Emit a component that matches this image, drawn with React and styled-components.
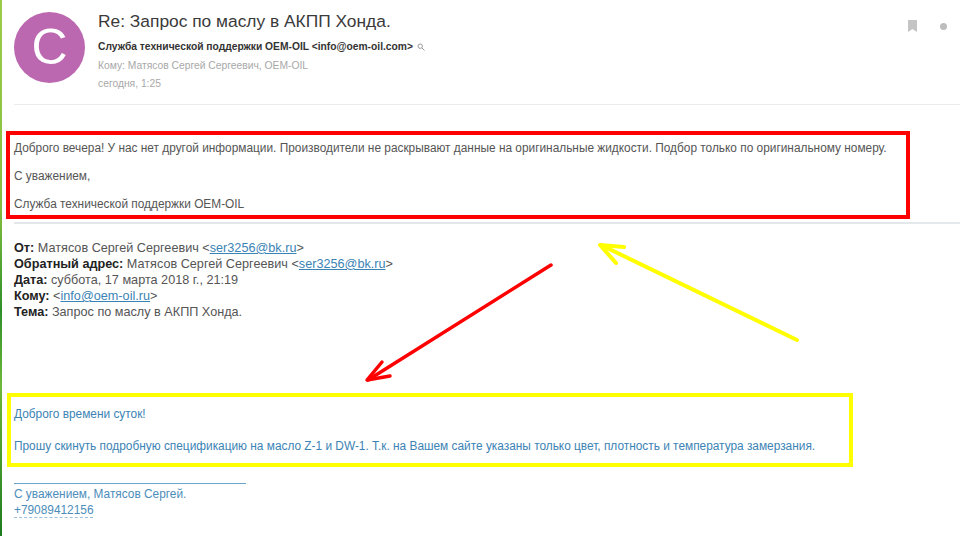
import React from 'react';
import styled, { createGlobalStyle } from 'styled-components';

const GlobalStyle = createGlobalStyle`
  html, body {
    margin: 0;
    padding: 0;
    background: #fff;
  }

  body {
    font-family: Arial, "Liberation Sans", sans-serif;
    font-size: 12px;
    color: #555;
  }
`;

const Page = styled.div`
  position: relative;
  width: 960px;
  height: 536px;
  overflow: hidden;
  background: #fff;
  display: flex;
`;

const EdgeStrip = styled.div`
  width: 2px;
  flex-shrink: 0;
  background: linear-gradient(to bottom, #9ccc4a 0%, #86c040 38%, #2f8f2a 58%, #6fb83a 72%, #1d7a1f 100%);
`;

const Content = styled.div`
  flex: 1;
  display: flex;
  flex-direction: column;
  padding-left: 4px;
`;

const Header = styled.header`
  display: flex;
  height: 104px;
  margin-left: 8px;
  border-bottom: 1px solid #ececec;
  box-sizing: content-box;
`;

const Avatar = styled.div`
  width: 71px;
  height: 71px;
  margin-top: 12px;
  border-radius: 50%;
  background: #bc68b0;
  color: #fff;
  font-size: 50px;
  line-height: 71px;
  text-align: center;
  flex-shrink: 0;
`;

const HeaderText = styled.div`
  margin-left: 13px;
  flex: 1;
  padding-top: 10px;
`;

const Subject = styled.h1`
  margin: 0;
  font-size: 17.36px;
  font-weight: 400;
  line-height: 22px;
  color: #3a3a3a;
`;

const Sender = styled.div`
  margin-top: 6px;
  display: flex;
  align-items: center;
  gap: 4px;
  font-size: 10.28px;
  line-height: 18px;
  font-weight: 700;
  color: #333;
`;

const Meta = styled.div`
  margin-top: ${(props) => (props.spaced ? '1px' : '0')};
  font-size: 10.3px;
  line-height: 18px;
  color: #a8a8a8;
`;

const HeaderActions = styled.div`
  display: flex;
  align-items: center;
  gap: 23px;
  height: 12px;
  margin-top: 20px;
  padding-right: 13px;
`;

const Dot = styled.span`
  width: 7px;
  height: 7px;
  border-radius: 50%;
  background: #bdbdbd;
`;

const ReplyBox = styled.section`
  width: 904px;
  height: 88px;
  margin-top: 26px;
  box-sizing: border-box;
  border: 4px solid #f00;
  padding-left: 4px;
  font-size: 11.87px;
  line-height: 28px;
  color: #555;
`;

const ReplyLines = styled.div`
  margin-top: -1px;
`;

const Divider = styled.div`
  height: 2px;
  margin: 3px 0 0 8px;
  background: #e4e8eb;
`;

const QuoteHead = styled.div`
  margin: 16px 0 0 8px;
  font-size: 12.67px;
  line-height: 16px;
  color: #555;
`;

const Label = styled.b`
  color: #222;
`;

const Link = styled.a`
  color: #3b83b5;
  text-decoration: underline;
`;

const QuoteBox = styled.section`
  width: 846px;
  height: 74px;
  margin: 73px 0 0 1px;
  box-sizing: border-box;
  border: 4px solid #ff0;
  padding: 1px 0 0 3px;
  font-size: 11.87px;
  line-height: 32px;
  color: #3b83b5;
`;

const Signature = styled.div`
  margin: 16px 0 0 8px;
  font-size: 11.87px;
  line-height: 16px;
  color: #4b8dba;
`;

const SignatureRule = styled.div`
  width: 232px;
  height: 1px;
  background: #6aa5cc;
  margin-bottom: 2px;
`;

const Phone = styled.span`
  border-bottom: 1px dashed #9cc0da;
`;

const ArrowLayer = styled.svg`
  position: absolute;
  left: 0;
  top: 0;
  pointer-events: none;
`;

function App() {
  return (
    <Page>
      <GlobalStyle />
      <EdgeStrip />
      <Content>
        <Header>
          <Avatar>C</Avatar>
          <HeaderText>
            <Subject>Re: Запрос по маслу в АКПП Хонда.</Subject>
            <Sender>
              Служба технической поддержки OEM-OIL &lt;info@oem-oil.com&gt;
              <svg width="8" height="8" viewBox="0 0 8 8" fill="none" stroke="#999" strokeWidth="1">
                <circle cx="3.2" cy="3.2" r="2.2" />
                <path d="M5 5l2.5 2.5" />
              </svg>
            </Sender>
            <Meta spaced>Кому: Матясов Сергей Сергеевич, OEM-OIL</Meta>
            <Meta>сегодня, 1:25</Meta>
          </HeaderText>
          <HeaderActions>
            <svg width="9" height="12" viewBox="0 0 9 12" fill="#c4c4c4">
              <path d="M0 0h9v12L4.5 9 0 12z" />
            </svg>
            <Dot />
          </HeaderActions>
        </Header>

        <ReplyBox>
          <ReplyLines>
            <div>Доброго вечера! У нас нет другой информации. Производители не раскрывают данные на оригинальные жидкости. Подбор только по оригинальному номеру.</div>
            <div>С уважением,</div>
            <div>Служба технической поддержки OEM-OIL</div>
          </ReplyLines>
        </ReplyBox>
        <Divider />

        <QuoteHead>
          <div><Label>От:</Label> Матясов Сергей Сергеевич &lt;<Link>ser3256@bk.ru</Link>&gt;</div>
          <div><Label>Обратный адрес:</Label> Матясов Сергей Сергеевич &lt;<Link>ser3256@bk.ru</Link>&gt;</div>
          <div><Label>Дата:</Label> суббота, 17 марта 2018 г., 21:19</div>
          <div><Label>Кому:</Label> &lt;<Link>info@oem-oil.ru</Link>&gt;</div>
          <div><Label>Тема:</Label> Запрос по маслу в АКПП Хонда.</div>
        </QuoteHead>

        <QuoteBox>
          <div>Доброго времени суток!</div>
          <div>Прошу скинуть подробную спецификацию на масло Z-1 и DW-1. Т.к. на Вашем сайте указаны только цвет, плотность и температура замерзания.</div>
        </QuoteBox>

        <Signature>
          <SignatureRule />
          <div>С уважением, Матясов Сергей.</div>
          <Phone>+79089412156</Phone>
        </Signature>
      </Content>

      <ArrowLayer width="960" height="536" viewBox="0 0 960 536" fill="none">
        <g stroke="#f00" strokeWidth="3.5" strokeLinecap="round" strokeLinejoin="round">
          <path d="M551 265L368 380" />
          <path d="M382 362L367 380L390 376" />
        </g>
        <g stroke="#ff0" strokeWidth="4" strokeLinecap="round" strokeLinejoin="round">
          <path d="M797 340L601 245" />
          <path d="M624 247L600 245L616 263" />
        </g>
      </ArrowLayer>
    </Page>
  );
}

export default App;
